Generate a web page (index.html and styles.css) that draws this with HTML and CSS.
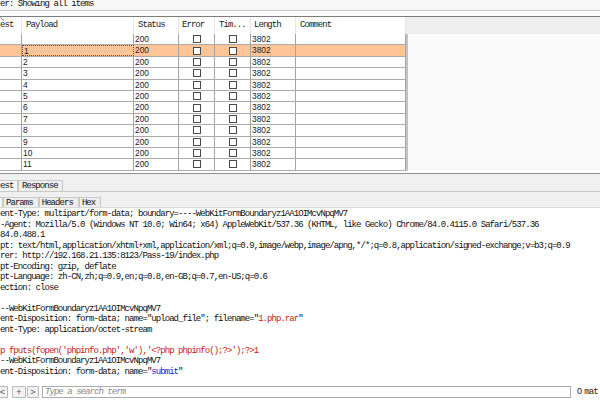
FILE: index.html
```html
<!DOCTYPE html>
<html>
<head>
<meta charset="utf-8">
<link rel="stylesheet" href="styles.css">
</head>
<body>
<div class="page">
  <div class="filter mono">er: Showing all items</div>
  <div class="gap"></div>
  <div class="results">
    <div class="table">
      <div class="row head mono">
        <div class="c first"><svg class="caret" width="5" height="4" viewBox="0 0 5 4"><path d="M0.5 0.5 L4 3.5" stroke="#555" stroke-width="0.8" fill="none"/></svg>est</div>
        <div class="c hpad">Payload</div>
        <div class="c hpad">Status</div>
        <div class="c hpad3">Error</div>
        <div class="c hpad">Tim...</div>
        <div class="c hpad3">Length</div>
        <div class="c hpad">Comment</div>
      </div>
      <div class="row"><div class="c"></div><div class="c"></div><div class="c">200</div><div class="c cbc"><span class="cb"></span></div><div class="c cbc"><span class="cb"></span></div><div class="c">3802</div><div class="c"></div></div>
      <div class="row sel"><div class="c"></div><div class="c focus">1</div><div class="c">200</div><div class="c cbc"><span class="cb"></span></div><div class="c cbc"><span class="cb"></span></div><div class="c">3802</div><div class="c"></div></div>
      <div class="row"><div class="c"></div><div class="c">2</div><div class="c">200</div><div class="c cbc"><span class="cb"></span></div><div class="c cbc"><span class="cb"></span></div><div class="c">3802</div><div class="c"></div></div>
      <div class="row"><div class="c"></div><div class="c">3</div><div class="c">200</div><div class="c cbc"><span class="cb"></span></div><div class="c cbc"><span class="cb"></span></div><div class="c">3802</div><div class="c"></div></div>
      <div class="row"><div class="c"></div><div class="c">4</div><div class="c">200</div><div class="c cbc"><span class="cb"></span></div><div class="c cbc"><span class="cb"></span></div><div class="c">3802</div><div class="c"></div></div>
      <div class="row"><div class="c"></div><div class="c">5</div><div class="c">200</div><div class="c cbc"><span class="cb"></span></div><div class="c cbc"><span class="cb"></span></div><div class="c">3802</div><div class="c"></div></div>
      <div class="row"><div class="c"></div><div class="c">6</div><div class="c">200</div><div class="c cbc"><span class="cb"></span></div><div class="c cbc"><span class="cb"></span></div><div class="c">3802</div><div class="c"></div></div>
      <div class="row"><div class="c"></div><div class="c">7</div><div class="c">200</div><div class="c cbc"><span class="cb"></span></div><div class="c cbc"><span class="cb"></span></div><div class="c">3802</div><div class="c"></div></div>
      <div class="row"><div class="c"></div><div class="c">8</div><div class="c">200</div><div class="c cbc"><span class="cb"></span></div><div class="c cbc"><span class="cb"></span></div><div class="c">3802</div><div class="c"></div></div>
      <div class="row"><div class="c"></div><div class="c">9</div><div class="c">200</div><div class="c cbc"><span class="cb"></span></div><div class="c cbc"><span class="cb"></span></div><div class="c">3802</div><div class="c"></div></div>
      <div class="row"><div class="c"></div><div class="c">10</div><div class="c">200</div><div class="c cbc"><span class="cb"></span></div><div class="c cbc"><span class="cb"></span></div><div class="c">3802</div><div class="c"></div></div>
      <div class="row"><div class="c"></div><div class="c">11</div><div class="c">200</div><div class="c cbc"><span class="cb"></span></div><div class="c cbc"><span class="cb"></span></div><div class="c">3802</div><div class="c"></div></div>
    </div>
    <div class="filler">
      <div class="filler-head"></div>
      <div class="filler-body"></div>
    </div>
  </div>
  <div class="split"></div>
  <div class="tabs1 mono">
    <div class="tab active t-est">est</div>
    <div class="tab">Response</div>
  </div>
  <div class="tabs2 mono">
    <div class="tab active t-edge"></div>
    <div class="tab">Params</div>
    <div class="tab">Headers</div>
    <div class="tab">Hex</div>
  </div>
  <div class="msg mono">ent-Type: multipart/form-data; boundary=----WebKitFormBoundaryz1AA1OIMcvNpqMV7
-Agent: Mozilla/5.0 (Windows NT 10.0; Win64; x64) AppleWebKit/537.36 (KHTML, like Gecko) Chrome/84.0.4115.0 Safari/537.36
84.0.488.1
pt: text/html,application/xhtml+xml,application/xml;q=0.9,image/webp,image/apng,*/*;q=0.8,application/signed-exchange;v=b3;q=0.9
rer: http://192.168.21.135:8123/Pass-19/index.php
pt-Encoding: gzip, deflate
pt-Language: zh-CN,zh;q=0.9,en;q=0.8,en-GB;q=0.7,en-US;q=0.6
ection: close

--WebKitFormBoundaryz1AA1OIMcvNpqMV7
ent-Disposition: form-data; name="upload_file"; filename="<span class="red">1.php.rar</span>"
ent-Type: application/octet-stream

<span class="red">p fputs(fopen('phpinfo.php','w'),'&lt;?php phpinfo();?&gt;');?&gt;1</span>
--WebKitFormBoundaryz1AA1OIMcvNpqMV7
ent-Disposition: form-data; name="<span class="blue">submit</span>"</div>
  <div class="search">
    <div class="btn b-prev">&lt;</div>
    <div class="btn b-plus">+</div>
    <div class="btn b-next">&gt;</div>
    <input class="field mono" type="text" placeholder="Type a search term">
    <div class="matches"><span class="num">0</span> <span class="mono">mat</span></div>
  </div>
</div>
</body>
</html>
```

FILE: styles.css
```css
* { box-sizing: border-box; }
html, body { margin: 0; padding: 0; }
body { width: 600px; height: 400px; overflow: hidden; background: #ffffff; color: #111; }

.mono {
  font-family: "Liberation Mono", monospace;
  font-size: 9px;
  letter-spacing: -0.95px;
}

.page { display: flex; flex-direction: column; height: 400px; }

.filter {
  height: 11px;
  line-height: 9px;
  background: #f8f8f8;
  border-bottom: 1px solid #c6c6c6;
  white-space: pre;
  color: #111;
}
.gap {
  height: 6px;
  background: #fbfbfb;
  border-bottom: 1px solid #7d7d7d;
}

.results { display: flex; height: 154px; }
.table { width: 406px; display: flex; flex-direction: column; }
.row {
  display: grid;
  grid-template-columns: 22px 112px 45px 36px 36px 45px 110px;
  height: 11.4px;
  border-bottom: 1px solid #ababab;
  font-family: "Liberation Sans", Arial, sans-serif;
  font-size: 8.4px;
  line-height: 10px;
  color: #1a1a1a;
}
.row .c {
  border-right: 1px solid #a4a4a4;
  padding-left: 1px;
  white-space: nowrap;
  overflow: hidden;
  position: relative;
}
.row.head {
  height: 17px;
  border-bottom: none;
  background: #ffffff;
  font-family: "Liberation Mono", monospace;
  font-size: 9px;
  letter-spacing: -0.95px;
  line-height: 17px;
  color: #222;
}
.row.head .c { border-right: 1px solid #e6e6e6; }
.row.head .c.first { padding-left: 0; }
.row.head .hpad { padding-left: 4px; }
.row.head .hpad3 { padding-left: 3px; }
.caret { position: absolute; left: 0; top: 0; }

.row.sel { background: #ffc597; }
.row .c.focus { border: 1px dotted #555; }

.cbc { display: flex; justify-content: center; align-items: center; padding-left: 0 !important; }
.cb {
  width: 8px; height: 8px;
  border: 1px solid #4a4a4a;
  background: #ffffff;
  display: block;
}

.filler { flex: 1; display: flex; flex-direction: column; }
.filler-head { height: 17px; background: #efefef; }
.filler-body { flex: 1; background: #fafafa; border-left: 2px solid #c4c4c4; height: 137px; }

.split { height: 3px; border-bottom: 1px solid #8e8e8e; background: #ffffff; }

.tabs1 {
  display: flex;
  align-items: flex-end;
  height: 18px;
  background: #f0f0f0;
  border-bottom: 1px solid #c8c8c8;
  padding-top: 5px;
}
.tabs2 {
  display: flex;
  align-items: flex-end;
  height: 16px;
  background: #f0f0f0;
  padding-top: 5px;
  border-bottom: 1px solid #dadada;
}
.tab {
  height: 11px;
  line-height: 11px;
  padding: 0 4px 0 3px;
  border: 1px solid #c9c9c9;
  border-bottom: none;
  background: #eeeeee;
  color: #111;
  white-space: nowrap;
}
.tabs2 .tab { height: 10px; line-height: 10px; padding: 0 5px 0 2px; }
.tab.active { background: #f6f6f6; border-left: none; }
.t-est { width: 18px; padding-left: 0; }
.t-edge { width: 3px; padding: 0 !important; }

.msg {
  flex: 1;
  white-space: pre;
  line-height: 10.5px;
  padding-top: 1px;
  overflow: hidden;
  color: #111;
}
.red { color: #c8201e; }
.blue { color: #2222d8; }

.search {
  height: 16px;
  display: flex;
  align-items: center;
  padding-bottom: 1px;
}
.search > * { flex-shrink: 0; }
.btn {
  height: 12px;
  border: 1px solid #b9b9b9;
  border-radius: 1px;
  background: #f2f2f2;
  color: #555;
  font-family: "Liberation Sans", Arial, sans-serif;
  font-size: 9px;
  line-height: 10px;
  text-align: center;
}
.b-prev { width: 11px; margin-left: -3px; }
.b-plus { width: 14px; margin-left: 4px; }
.b-next { width: 12px; margin-left: 1px; }
.field {
  width: 529px;
  height: 12px;
  margin-left: 3px;
  border: 1px solid #adadad;
  background: #ffffff;
  padding: 0 2px;
  outline: none;
  line-height: 10px;
}
.field::placeholder { color: #8a8a8a; font-style: italic; }
.matches {
  margin-left: 6px;
  white-space: nowrap;
  font-size: 9px;
  color: #222;
}
.matches .num { font-family: "Liberation Sans", Arial, sans-serif; font-size: 9px; }
```
